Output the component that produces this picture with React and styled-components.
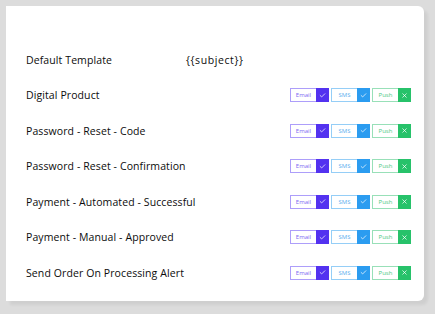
import React from 'react'
import styled, { createGlobalStyle } from 'styled-components'
import { Check, X } from 'lucide-react'

const Global = createGlobalStyle`
  html, body { margin: 0; padding: 0; background: #dcdcdc; }
  body { font-family: "Open Sans", "Liberation Sans", sans-serif; }
`

const Page = styled.div`
  width: 435px;
  height: 314px;
  box-sizing: border-box;
  padding: 6px 11px 13px 6px;
  background: #dcdcdc;
`

const Card = styled.div`
  height: 100%;
  box-sizing: border-box;
  background: #ffffff;
  border-radius: 0 6px 6px 0;
  box-shadow: 4px 4px 3px rgba(0, 0, 0, 0.06);
  padding: 36px 13px 0 20px;
  display: flex;
  flex-direction: column;
`

const Row = styled.div`
  height: 35.5px;
  display: flex;
  align-items: center;
  justify-content: space-between;
`

const Name = styled.div`
  font-size: 10.5px;
  font-weight: 500;
  color: #0c0c0c;
  letter-spacing: 0.1px;
`

const Subject = styled.div`
  font-size: 10.5px;
  font-weight: 500;
  color: #0c0c0c;
  letter-spacing: 0.6px;
  margin-left: 74px;
`

const Left = styled.div`
  display: flex;
  align-items: center;
`

const Toggles = styled.div`
  display: flex;
  gap: 2px;
`

const Toggle = styled.div`
  display: flex;
  height: 14px;
  box-sizing: border-box;
`

const Label = styled.div`
  width: 26px;
  box-sizing: border-box;
  border: 1px solid ${({ c }) => c};
  border-right: none;
  display: flex;
  align-items: center;
  justify-content: center;
  font-size: 6px;
  color: ${({ t }) => t};
  background: #fff;
`

const Mark = styled.div`
  width: 13px;
  background: ${({ c }) => c};
  display: flex;
  align-items: center;
  justify-content: center;
  color: #fff;
`

const channels = [
  { label: 'Email', border: '#ad9efa', text: '#7d68f2', fill: '#5332f0', icon: 'check' },
  { label: 'SMS', border: '#95cef7', text: '#5aaeee', fill: '#2b9cf0', icon: 'check' },
  { label: 'Push', border: '#98e0b8', text: '#4ec883', fill: '#27c26a', icon: 'x' },
]

const templates = [
  'Digital Product',
  'Password - Reset - Code',
  'Password - Reset - Confirmation',
  'Payment - Automated - Successful',
  'Payment - Manual - Approved',
  'Send Order On Processing Alert',
]

function ChannelToggles() {
  return (
    <Toggles>
      {channels.map((ch) => (
        <Toggle key={ch.label}>
          <Label c={ch.border} t={ch.text}>{ch.label}</Label>
          <Mark c={ch.fill}>
            {ch.icon === 'check' ? <Check size={7} strokeWidth={2.5} /> : <X size={7} strokeWidth={2.5} />}
          </Mark>
        </Toggle>
      ))}
    </Toggles>
  )
}

export default function App() {
  return (
    <Page>
      <Global />
      <Card>
        <Row>
          <Left>
            <Name>Default Template</Name>
            <Subject>{'{{subject}}'}</Subject>
          </Left>
        </Row>
        {templates.map((t) => (
          <Row key={t}>
            <Name>{t}</Name>
            <ChannelToggles />
          </Row>
        ))}
      </Card>
    </Page>
  )
}
